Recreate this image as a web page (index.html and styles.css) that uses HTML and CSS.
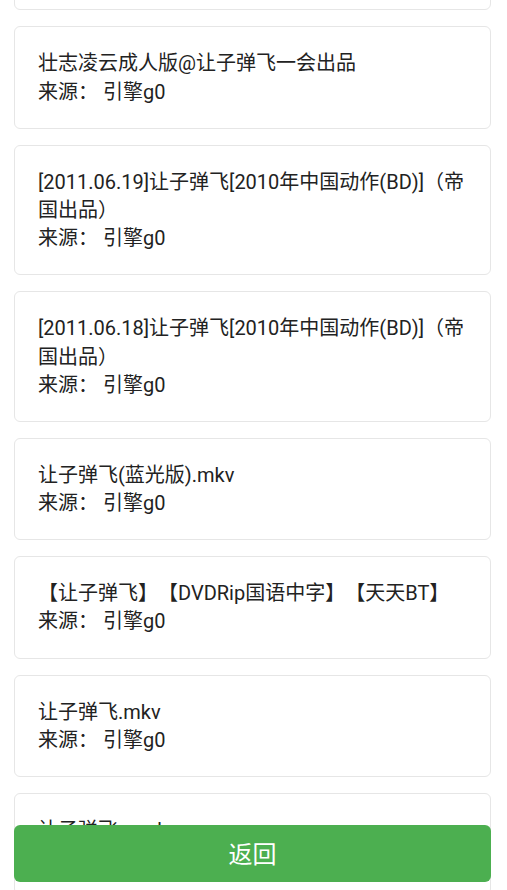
FILE: index.html
```html
<!DOCTYPE html>
<html lang="zh-CN">
<head>
    <meta charset="UTF-8">
    <meta name="viewport" content="width=device-width, initial-scale=1.0">
    <title>搜索结果</title>
    <link rel="stylesheet" href="styles.css">
</head>
<body>
    <div class="list">
        <div class="item">
            <div class="title">让子弹飞.HD1280高清国语中字</div>
            <div class="source">来源： 引擎g0</div>
        </div>
        <div class="item">
            <div class="title">壮志凌云成人版@让子弹飞一会出品</div>
            <div class="source">来源： 引擎g0</div>
        </div>
        <div class="item">
            <div class="title">[2011.06.19]让子弹飞[2010年中国动作(BD)]（帝国出品）</div>
            <div class="source">来源： 引擎g0</div>
        </div>
        <div class="item">
            <div class="title">[2011.06.18]让子弹飞[2010年中国动作(BD)]（帝国出品）</div>
            <div class="source">来源： 引擎g0</div>
        </div>
        <div class="item">
            <div class="title">让子弹飞(蓝光版).mkv</div>
            <div class="source">来源： 引擎g0</div>
        </div>
        <div class="item">
            <div class="title">【让子弹飞】【DVDRip国语中字】【天天BT】</div>
            <div class="source">来源： 引擎g0</div>
        </div>
        <div class="item">
            <div class="title">让子弹飞.mkv</div>
            <div class="source">来源： 引擎g0</div>
        </div>
        <div class="item">
            <div class="title">让子弹飞.rmvb</div>
            <div class="source">来源： 引擎g0</div>
        </div>
    </div>

    <button class="back-btn" type="button">返回</button>

    <script src="script.js"></script>
</body>
</html>
```

FILE: styles.css
```css
body{
    margin: 0;
    background-color: #fff;
    color: #222;
    font-family: Roboto, "Noto Sans CJK SC", sans-serif;
}
.list{
    display: flex;
    flex-direction: column;
    gap: 16px;
    padding: 16px 16px 90px 14px;
}
.item{
    border: 1px solid #e6e6e6;
    border-radius: 6px;
    padding: 22px 23px;
    font-size: 20px;
    line-height: 1.41;
    text-spacing-trim: space-all;
}
.back-btn{
    position: fixed;
    left: 14px;
    right: 16px;
    bottom: 8px;
    height: 57px;
    padding: 0 0 3px 0;
    border: none;
    border-radius: 6px;
    background-color: #4caf50;
    color: #fff;
    font-family: Roboto, "Noto Sans CJK SC", sans-serif;
    font-size: 24px;
}
```

FILE: script.js
```js
// the list is shown a bit scrolled down
window.scrollTo(0, 108);
```
